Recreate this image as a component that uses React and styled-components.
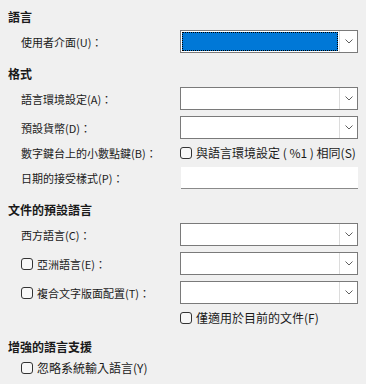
import React from "react";
import styled, { createGlobalStyle } from "styled-components";

const GlobalStyle = createGlobalStyle`
  html, body {
    margin: 0;
    padding: 0;
    background: #f0f0f0;
  }
  body {
    font-family: "Noto Sans CJK TC", "Noto Sans", sans-serif;
    font-size: 11px;
    color: #1a1a1a;
  }
`;

const Page = styled.div`
  width: 366px;
  height: 384px;
  box-sizing: border-box;
  padding: 7px 8px 0 8px;
  display: flex;
  flex-direction: column;
  gap: 11px;
`;

const Section = styled.section`
  display: flex;
  flex-direction: column;
`;

const Header = styled.div`
  height: 20px;
  line-height: 20px;
  font-size: 12px;
  font-weight: 600;
  margin-bottom: 3px;
`;

const Rows = styled.div`
  display: flex;
  flex-direction: column;
  gap: 6px;
`;

const Row = styled.div`
  display: grid;
  grid-template-columns: 172px 178px;
  align-items: center;
  height: ${(p) => p.$h || 23}px;
`;

const Label = styled.div`
  padding-left: ${(p) => (p.$flush ? 0 : 13)}px;
  display: flex;
  align-items: center;
  gap: 4px;
  white-space: nowrap;
  line-height: 16px;
  font-size: ${(p) => (p.$wide ? 12 : 11)}px;
`;

const Box = styled.span`
  width: 12px;
  height: 12px;
  box-sizing: border-box;
  border: 1px solid #333;
  border-radius: 3px;
  background: #f7f7f7;
  flex-shrink: 0;
`;

const Check = ({ children, flush, wide }) => (
  <Label $flush={flush} $wide={wide}>
    <Box />
    <span>{children}</span>
  </Label>
);

const Combo = styled.div`
  height: 23px;
  box-sizing: border-box;
  border: 1px solid #7a7a7a;
  background: #fff;
  display: flex;
`;

const ComboValue = styled.div`
  flex: 1;
  margin: ${(p) => (p.$focus ? "1px" : "0")};
  background: ${(p) => (p.$focus ? "#0078d7" : "transparent")};
  outline: ${(p) => (p.$focus ? "1px dotted #000" : "none")};
  outline-offset: -1px;
`;

const ComboButton = styled.div`
  width: 17px;
  border-left: 1px solid #dcdcdc;
  display: flex;
  align-items: center;
  justify-content: center;
  background: #fff;
`;

const Chevron = () => (
  <svg width="8" height="5" viewBox="0 0 8 5">
    <path d="M0.5 0.5 L4 4 L7.5 0.5" fill="none" stroke="#606060" strokeWidth="1" />
  </svg>
);

const Select = ({ focus }) => (
  <Combo>
    <ComboValue $focus={focus} />
    <ComboButton>
      <Chevron />
    </ComboButton>
  </Combo>
);

const TextField = styled.div`
  height: 22px;
  box-sizing: border-box;
  margin-left: 1px;
  background: #fff;
  border-bottom: 1px solid #8a8a8a;
`;

export default function App() {
  return (
    <>
      <GlobalStyle />
      <Page>
        <Section>
          <Header>語言</Header>
          <Rows>
            <Row>
              <Label>使用者介面(U)：</Label>
              <Select focus />
            </Row>
          </Rows>
        </Section>

        <Section>
          <Header>格式</Header>
          <Rows>
            <Row>
              <Label>語言環境設定(A)：</Label>
              <Select />
            </Row>
            <Row>
              <Label>預設貨幣(D)：</Label>
              <Select />
            </Row>
            <Row $h={16}>
              <Label>數字鍵台上的小數點鍵(B)：</Label>
              <Check flush wide>與語言環境設定 ( %1 ) 相同(S)</Check>
            </Row>
            <Row $h={22}>
              <Label>日期的接受樣式(P)：</Label>
              <TextField />
            </Row>
          </Rows>
        </Section>

        <Section>
          <Header>文件的預設語言</Header>
          <Rows>
            <Row>
              <Label>西方語言(C)：</Label>
              <Select />
            </Row>
            <Row>
              <Check>亞洲語言(E)：</Check>
              <Select />
            </Row>
            <Row>
              <Check>複合文字版面配置(T)：</Check>
              <Select />
            </Row>
            <Row $h={16}>
              <span />
              <Check flush wide>僅適用於目前的文件(F)</Check>
            </Row>
          </Rows>
        </Section>

        <Section>
          <Header>增強的語言支援</Header>
          <Rows>
            <Row $h={16}>
              <Check wide>忽略系統輸入語言(Y)</Check>
            </Row>
          </Rows>
        </Section>
      </Page>
    </>
  );
}
